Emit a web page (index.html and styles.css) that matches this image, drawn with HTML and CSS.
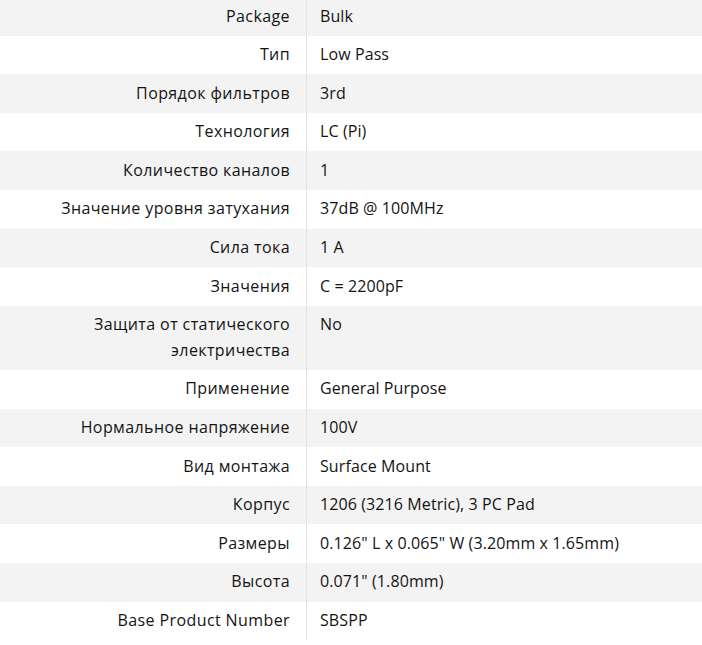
FILE: index.html
```html
<!DOCTYPE html>
<html lang="ru">
<head>
<meta charset="utf-8">
<link rel="stylesheet" href="styles.css">
</head>
<body>
<table class="specs">
<tbody>
<tr><th>Package</th><td>Bulk</td></tr>
<tr><th>Тип</th><td>Low Pass</td></tr>
<tr><th>Порядок фильтров</th><td>3rd</td></tr>
<tr><th>Технология</th><td>LC (Pi)</td></tr>
<tr><th>Количество каналов</th><td>1</td></tr>
<tr><th>Значение уровня затухания</th><td>37dB @ 100MHz</td></tr>
<tr><th>Сила тока</th><td>1 A</td></tr>
<tr><th>Значения</th><td>C = 2200pF</td></tr>
<tr><th>Защита от статического электричества</th><td>No</td></tr>
<tr><th>Применение</th><td>General Purpose</td></tr>
<tr><th>Нормальное напряжение</th><td>100V</td></tr>
<tr><th>Вид монтажа</th><td>Surface Mount</td></tr>
<tr><th>Корпус</th><td>1206 (3216 Metric), 3 PC Pad</td></tr>
<tr><th>Размеры</th><td>0.126" L x 0.065" W (3.20mm x 1.65mm)</td></tr>
<tr><th>Высота</th><td>0.071" (1.80mm)</td></tr>
<tr><th>Base Product Number</th><td>SBSPP</td></tr>
</tbody>
</table>
</body>
</html>
```
FILE: styles.css
```css
html, body {
  margin: 0;
  padding: 0;
  background: #ffffff;
}
body {
  font-family: "Open Sans", "Noto Sans", sans-serif;
  font-size: 16px;
  color: #141414;
}
.specs {
  width: 100%;
  border-collapse: collapse;
  margin-top: -3px;
}
.specs th,
.specs td {
  padding: 6.5px 0;
  line-height: 25.6px;
  vertical-align: top;
  font-weight: normal;
}
.specs th {
  width: 290px;
  padding-right: 16px;
  text-align: right;
  letter-spacing: 0.4px;
  border-right: 1px solid #e4e4e4;
}
.specs td {
  padding-left: 13px;
  text-align: left;
  letter-spacing: 0.1px;
}
.specs tr:nth-child(odd) {
  background: #f3f3f3;
}
```
